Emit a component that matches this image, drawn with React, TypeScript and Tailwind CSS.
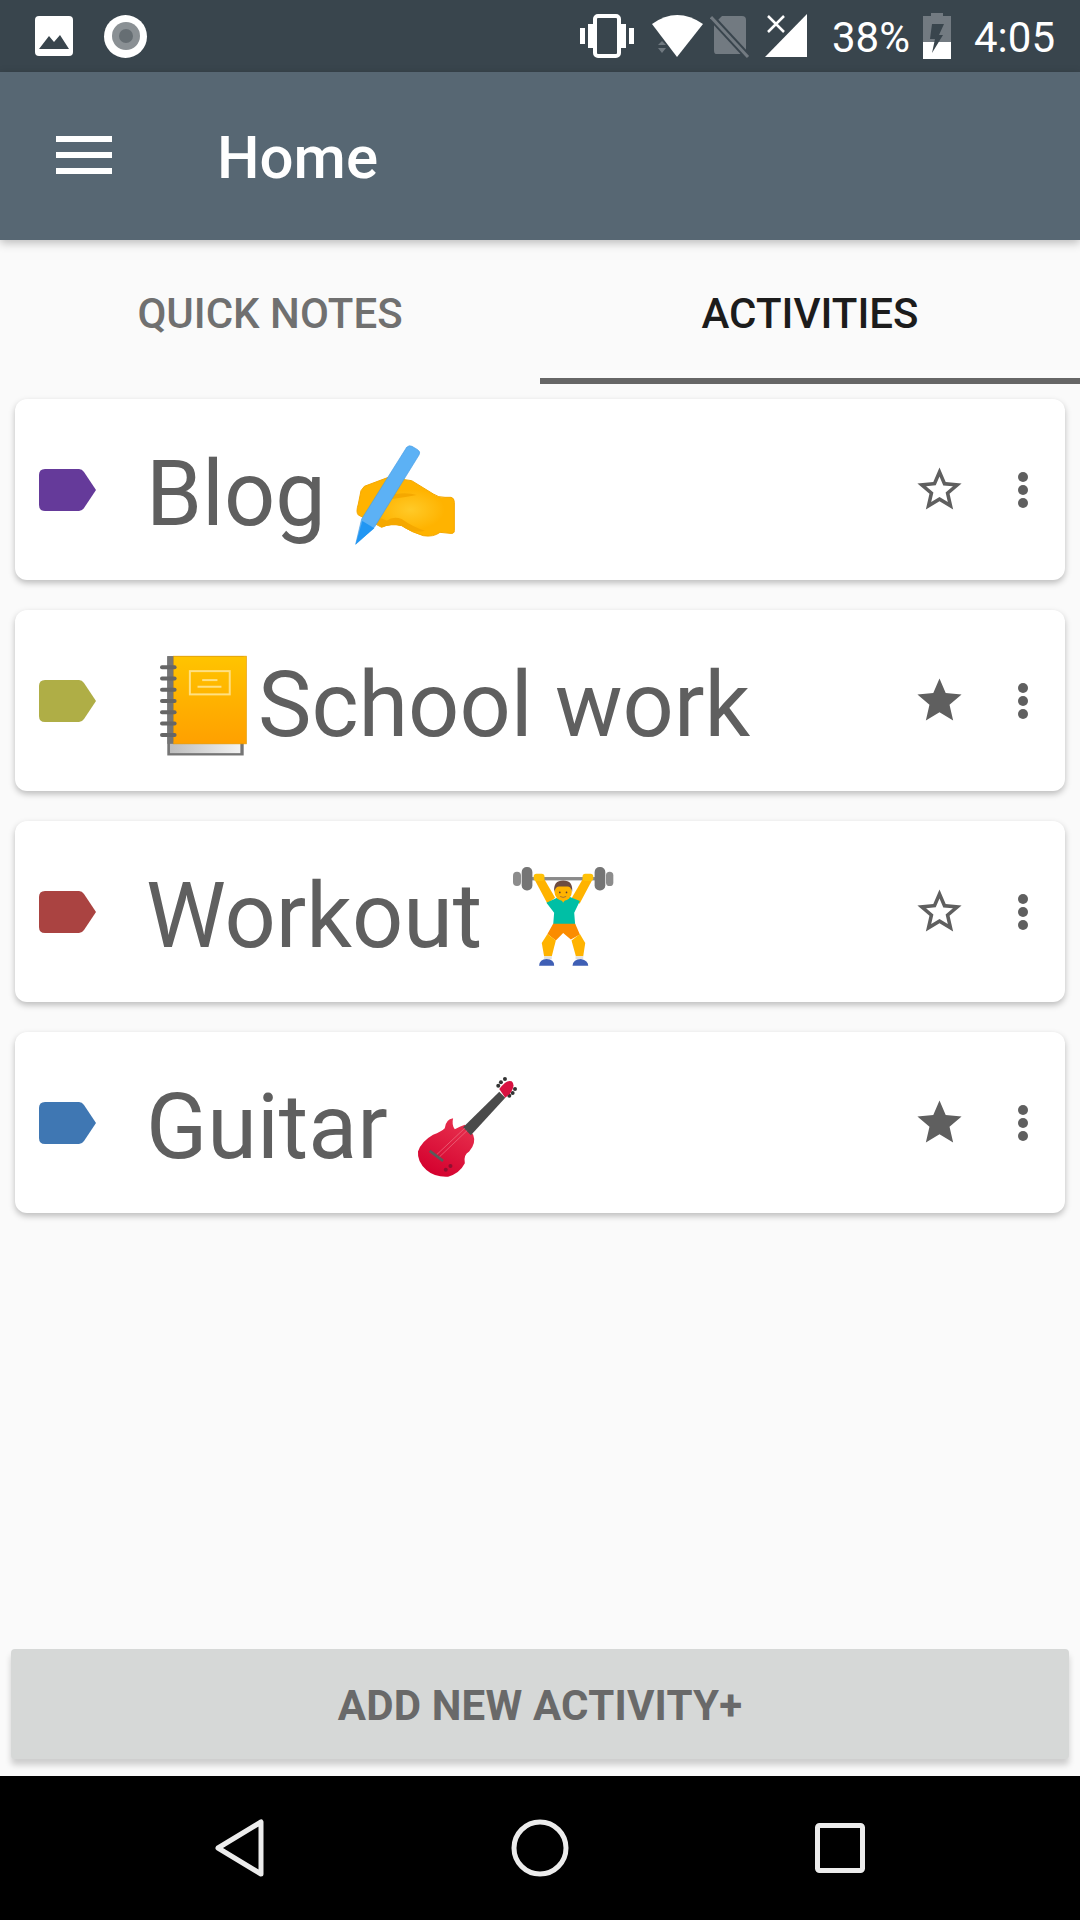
import React from 'react';

const TagIcon = ({ color }: { color: string }) => (
  <svg width="57" height="42" viewBox="0 0 57 42" className="shrink-0">
    <path d="M6 0H40Q43 0 45 3L57 21L45 39Q43 42 40 42H6Q0 42 0 36V6Q0 0 6 0Z" fill={color} />
  </svg>
);

const StarIcon = ({ filled }: { filled: boolean }) => (
  <svg width="53" height="53" viewBox="0 0 24 24" fill="#5f5f5f">
    <path
      d={
        filled
          ? 'M12 17.27L18.18 21l-1.64-7.03L22 9.24l-7.19-.61L12 2 9.19 8.63 2 9.24l5.46 4.73L5.82 21z'
          : 'M22 9.24l-7.19-.62L12 2 9.19 8.63 2 9.24l5.46 4.73L5.82 21 12 17.27 18.18 21l-1.63-7.03L22 9.24zM12 15.4l-3.76 2.27 1-4.28-3.32-2.88 4.38-.38L12 6.1l1.71 4.04 4.38.38-3.32 2.88 1 4.28L12 15.4z'
      }
    />
  </svg>
);

const Dots = () => (
  <div className="flex flex-col gap-[3px]">
    <div className="w-[10px] h-[10px] rounded-full bg-[#5f5f5f]" />
    <div className="w-[10px] h-[10px] rounded-full bg-[#5f5f5f]" />
    <div className="w-[10px] h-[10px] rounded-full bg-[#5f5f5f]" />
  </div>
);

const HandEmoji = () => (
  <svg width="100" height="101" viewBox="30 25 300 303" className="shrink-0">
    <defs>
      <radialGradient id="hand" cx="0.55" cy="0.55" r="0.35">
        <stop offset="0" stopColor="#ffca28" />
        <stop offset="1" stopColor="#ffb300" />
      </radialGradient>
    </defs>
    <path
      d="M58 152L130 125L200 135L265 175Q280 186 300 185H318Q328 187 328 200V285Q328 295 315 293L285 290Q265 305 235 300Q200 290 170 270Q135 262 110 275Q85 262 60 248L40 238Q32 230 40 205L48 165Z"
      fill="url(#hand)"
      stroke="#f5a800"
      strokeWidth="3"
    />
    <path d="M75 250Q100 240 125 255Q145 240 170 250Q205 275 240 285Q200 295 170 270Q135 262 110 275Z" fill="#f5a800" />
    <path d="M150 175Q190 170 215 178Q180 185 140 190Z" fill="#f5a800" />
    <path d="M185 35Q192 27 201 32L218 42Q228 48 222 58L88 275L32 326L50 250Z" fill="#5cb1f5" stroke="#4a9fe6" strokeWidth="2" />
    <path d="M52 256L88 278L32 326Z" fill="#2196f3" />
  </svg>
);

const NotebookEmoji = () => (
  <svg width="87" height="101" viewBox="30 30 262 303" className="shrink-0">
    <defs>
      <linearGradient id="nb" x1="0" y1="0" x2="0" y2="1">
        <stop offset="0" stopColor="#ffc400" />
        <stop offset="1" stopColor="#ffa000" />
      </linearGradient>
      <linearGradient id="pg" x1="0" y1="0" x2="1" y2="0">
        <stop offset="0" stopColor="#bdbdbd" />
        <stop offset="1" stopColor="#f2f2f2" />
      </linearGradient>
    </defs>
    <rect x="52" y="33" width="230" height="299" fill="#757575" />
    <rect x="60" y="290" width="212" height="35" fill="url(#pg)" />
    <rect x="70" y="33" width="220" height="264" fill="url(#nb)" stroke="#e59a00" strokeWidth="2" />
    <rect x="52" y="33" width="18" height="264" fill="#757575" />
    {[66, 100, 134, 168, 202, 236, 270].map((y) => (
      <rect key={y} x="30" y={y - 6} width="50" height="12" rx="6" fill="#666666" />
    ))}
    <rect x="120" y="78" width="120" height="70" fill="none" stroke="#ffe082" strokeWidth="6" />
    <rect x="157" y="102" width="46" height="6" fill="#ffe082" />
    <rect x="143" y="122" width="72" height="6" fill="#ffe082" />
  </svg>
);

const LifterEmoji = () => (
  <svg width="101" height="101" viewBox="22 35 302 302" className="shrink-0">
    <rect x="75" y="68" width="195" height="10" fill="#8a8a8a" />
    <rect x="22" y="52" width="24" height="43" rx="12" fill="#8c8c8c" />
    <rect x="48" y="38" width="32" height="70" rx="15" fill="#757575" />
    <rect x="300" y="52" width="22" height="43" rx="11" fill="#8c8c8c" />
    <rect x="266" y="38" width="32" height="70" rx="15" fill="#757575" />
    <path d="M88 78L114 72L148 130L125 148Z" fill="#ffb300" />
    <path d="M258 78L232 72L198 130L221 148Z" fill="#ffb300" />
    <rect x="84" y="58" width="32" height="22" rx="8" fill="#ffc107" />
    <rect x="230" y="58" width="32" height="22" rx="8" fill="#ffc107" />
    <path d="M122 145L165 125H185L222 140L205 175L208 212H142L145 175Z" fill="#00bfa5" />
    <path d="M160 125H185L172 145Z" fill="#ffb300" />
    <ellipse cx="172" cy="112" rx="26" ry="28" fill="#ffb300" />
    <path d="M145 112Q142 78 172 78Q202 78 199 112Q195 96 185 96H160Q150 96 145 112Z" fill="#6d4c41" />
    <circle cx="162" cy="114" r="2.500" fill="#5d4037" />
    <circle cx="182" cy="114" r="2.500" fill="#5d4037" />
    <path d="M163 126Q172 132 181 126" stroke="#795548" strokeWidth="2" fill="none" />
    <path d="M142 208H208L222 240L195 255L172 235L150 258L125 238Z" fill="#fb8c00" />
    <path d="M125 238L150 258L138 305H115L108 265Z" fill="#ffb300" />
    <path d="M222 238L197 258L210 305H232L238 265Z" fill="#ffb300" />
    <rect x="115" y="305" width="23" height="9" fill="#e0e0e0" />
    <rect x="209" y="305" width="23" height="9" fill="#e0e0e0" />
    <path d="M100 333Q102 313 122 313Q145 313 145 333Z" fill="#3f5fb5" />
    <path d="M200 333Q202 313 225 313Q247 318 247 333Z" fill="#3f5fb5" />
  </svg>
);

const GuitarEmoji = () => (
  <svg width="101" height="101" viewBox="22 22 302 302" className="shrink-0">
    <defs>
      <linearGradient id="gt" x1="0.8" y1="0" x2="0.3" y2="1">
        <stop offset="0" stopColor="#e8324f" />
        <stop offset="1" stopColor="#d4002e" />
      </linearGradient>
    </defs>
    {[[265, 48], [273, 38], [285, 28], [315, 58], [308, 70], [298, 78]].map(([x, y]) => (
      <circle key={x} cx={x} cy={y} r="6" fill="#333333" />
    ))}
    <path d="M105 175Q108 148 130 145Q125 165 135 178Q150 170 165 165L190 195Q200 220 178 245Q160 255 165 280Q150 310 115 320Q75 322 50 300Q22 275 25 245Q35 215 70 195Q95 185 105 175Z" fill="url(#gt)" />
    <path d="M268 66L286 84L183 196L160 172Z" fill="#4a4a4a" />
    <path d="M268 58Q290 28 305 35Q318 45 300 72L286 84Z" fill="#d81140" />
    <path d="M165 175L80 255M172 182L88 262" stroke="#f2939f" strokeWidth="1.500" />
    <path d="M60 243L100 273" stroke="#5a5a5a" strokeWidth="8" />
    <circle cx="122" cy="288" r="6" fill="#8f1030" />
    <circle cx="108" cy="299" r="6" fill="#8f1030" />
  </svg>
);

const StatusIcons = () => (
  <div className="flex items-center">
    <svg width="54" height="44" viewBox="0 0 54 44" className="shrink-0">
      <rect x="15" y="2" width="24" height="40" rx="3" fill="none" stroke="#fff" strokeWidth="4" />
      <rect x="0" y="14" width="5" height="16" fill="#fff" />
      <rect x="8" y="10" width="5" height="24" fill="#fff" />
      <rect x="41" y="10" width="5" height="24" fill="#fff" />
      <rect x="49" y="14" width="5" height="16" fill="#fff" />
    </svg>
    <svg width="54" height="44" viewBox="0 0 54 44" className="ml-[17px] shrink-0">
      <path d="M1 10Q26 -8 52 10L26 43Z" fill="#fff" />
      <path d="M7 31L11 27L15 31ZM7 34H15L11 39Z" fill="#707980" />
    </svg>
    <svg width="40" height="44" viewBox="0 0 40 44" className="ml-[5px] shrink-0">
      <path d="M12 2H32Q36 2 36 6V40H6Q4 40 4 36V10Z" fill="#727a81" />
      <path d="M1 3L38 43" stroke="#39454d" strokeWidth="7" />
      <path d="M1 3L38 43" stroke="#727a81" strokeWidth="3" />
    </svg>
    <svg width="44" height="46" viewBox="0 0 44 46" className="ml-[15px] shrink-0">
      <path d="M42 1V44H0Z" fill="#fff" />
      <path d="M3 3L19 19M19 3L3 19" stroke="#fff" strokeWidth="2.500" />
    </svg>
    <span className="ml-[23px] mt-[4px] text-[42px] leading-none text-white">38%</span>
    <svg width="28" height="46" viewBox="0 0 28 46" className="ml-[13px] shrink-0">
      <path d="M8 0H20V3H28V46H0V3H8Z" fill="#727a81" />
      <path d="M0 29H28V46H0Z" fill="#fff" />
      <path d="M9 11H21L16 22H20L9 40L12 26H7Z" fill="#39454d" />
    </svg>
    <span className="ml-[23px] mt-[4px] text-[42px] leading-none text-white">4:05</span>
  </div>
);

const NavBar = () => (
  <div className="h-[144px] bg-black flex items-center justify-center shrink-0">
    <div className="w-[650px] flex items-center justify-between">
      <svg width="50" height="58" viewBox="0 0 50 58">
        <path d="M46 3V55L3 29Z" fill="none" stroke="#ececec" strokeWidth="5" strokeLinejoin="round" />
      </svg>
      <svg width="58" height="58" viewBox="0 0 58 58">
        <circle cx="29" cy="29" r="26" fill="none" stroke="#ececec" strokeWidth="5" />
      </svg>
      <svg width="50" height="50" viewBox="0 0 50 50">
        <rect x="2.500" y="2.500" width="45" height="45" rx="2" fill="none" stroke="#ececec" strokeWidth="5" />
      </svg>
    </div>
  </div>
);

const activities = [
  { name: 'Blog', color: '#653a9a', starred: false, before: null, after: <HandEmoji /> },
  { name: 'School work', color: '#afae46', starred: true, before: <NotebookEmoji />, after: null },
  { name: 'Workout', color: '#aa4341', starred: false, before: null, after: <LifterEmoji /> },
  { name: 'Guitar', color: '#3f77b3', starred: true, before: null, after: <GuitarEmoji /> },
];

export default function App() {
  return (
    <div className="w-[1080px] h-[1920px] flex flex-col bg-[#fafafa] overflow-hidden font-['Roboto',sans-serif]">
      <div className="h-[72px] bg-[#39454d] flex items-center justify-between pl-[35px] pr-[25px] shrink-0">
        <div className="flex items-center gap-[31px]">
          <svg width="38" height="40" viewBox="0 0 38 40">
            <rect width="38" height="40" rx="4" fill="#fff" />
            <path d="M4 33L14 20L19 26L25 19L34 33Z" fill="#39454d" />
          </svg>
          <div className="w-[43px] h-[43px] rounded-full bg-white flex items-center justify-center">
            <div className="w-[28px] h-[28px] rounded-full bg-[#8a9094] flex items-center justify-center">
              <div className="w-[14px] h-[14px] rounded-full bg-[#666e73]" />
            </div>
          </div>
        </div>
        <StatusIcons />
      </div>

      <div className="h-[168px] bg-[#576773] flex items-center pl-[56px] shadow-[0_3px_9px_rgba(0,0,0,0.25)] relative shrink-0">
        <div className="flex flex-col gap-[10px] w-[56px] mb-[2px]">
          <div className="h-[6px] bg-white" />
          <div className="h-[6px] bg-white" />
          <div className="h-[6px] bg-white" />
        </div>
        <span className="ml-[105px] mt-[4px] text-[60px] font-medium text-white leading-none">Home</span>
      </div>

      <div className="h-[144px] flex shrink-0">
        <div className="w-[540px] pt-[3px] flex items-center justify-center text-[42px] font-medium text-[#707070]">QUICK NOTES</div>
        <div className="w-[540px] pt-[9px] flex items-center justify-center text-[42px] font-medium text-[#1c1c1c] border-b-[6px] border-[#666666]">ACTIVITIES</div>
      </div>

      <div className="flex-1 flex flex-col gap-[30px] px-[15px] pt-[15px]">
        {activities.map((a) => (
          <div key={a.name} className="h-[181px] bg-white rounded-[12px] shadow-[0_3px_6px_rgba(0,0,0,0.25)] flex items-center pl-[24px] pr-[37px]">
            <TagIcon color={a.color} />
            <div className="ml-[50px] pt-[10px] flex items-center flex-1 text-[90px] leading-none text-[#5f5f5f]">
              {a.before && <div className="ml-[14px] mr-[11px] flex">{a.before}</div>}
              <span>{a.name}</span>
              {a.after && <div className={a.name === 'Workout' ? 'ml-[31px] flex' : 'ml-[29px] flex'}>{a.after}</div>}
            </div>
            <div className="flex items-center gap-[52px]">
              <StarIcon filled={a.starred} />
              <Dots />
            </div>
          </div>
        ))}
      </div>

      <div className="px-[11px] pb-[17px] shrink-0">
        <div className="h-[110px] pt-[2px] bg-[#d6d8d7] rounded-[4px] shadow-[0_6px_6px_rgba(0,0,0,0.18)] flex items-center justify-center text-[42px] font-bold tracking-[0.2px] text-[#696969]">
          ADD NEW ACTIVITY+
        </div>
      </div>

      <NavBar />
    </div>
  );
}
